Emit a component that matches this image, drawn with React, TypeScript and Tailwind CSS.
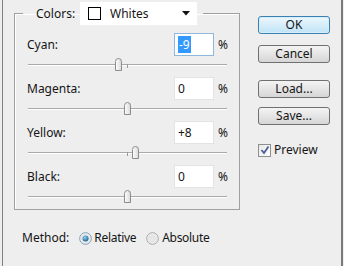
import React from "react";

const rows = [
  { name: "Cyan", text: "-9", value: -9, focused: true },
  { name: "Magenta", text: "0", value: 0 },
  { name: "Yellow", text: "+8", value: 8 },
  { name: "Black", text: "0", value: 0 },
];

function Thumb() {
  return (
    <svg width="9" height="14" viewBox="0 0 9 14" className="block">
      <defs>
        <linearGradient id="thumbFill" x1="0" y1="0" x2="1" y2="0">
          <stop offset="0" stopColor="#ffffff" />
          <stop offset="1" stopColor="#d9d9d9" />
        </linearGradient>
      </defs>
      <path
        d="M1.5 3.5 Q1.5 0.5 4.5 0.5 Q7.5 0.5 7.5 3.5 L7.5 12.5 L1.5 12.5 Z"
        fill="url(#thumbFill)"
        stroke="#8c8c8c"
      />
    </svg>
  );
}

function SliderRow({ value }: { value: number }) {
  return (
    <div className="relative h-[21px]">
      <div className="absolute left-[13px] right-[12px] top-[8px] h-[2px] border-t border-[#a9a9a9] border-b border-b-white" />
      <div className="absolute left-[112px] top-[8px] w-px h-[4px] bg-[#9a9a9a]" />
      <div className="absolute top-[2px]" style={{ left: 112 + value - 4 }}>
        <Thumb />
      </div>
    </div>
  );
}

function ColorRow({ name, text, value, focused }: { name: string; text: string; value: number; focused?: boolean }) {
  return (
    <div>
      <div className="flex items-center h-[23px] pl-[12px]">
        <span className="flex-1">{name}:</span>
        <div
          className={
            "w-[40px] h-[23px] bg-white border flex items-center pl-[3px] " +
            (focused ? "border-[#8fb8dd]" : "border-[#e3e3e3]")
          }
        >
          {focused ? <span className="bg-[#3399ff] text-white px-px leading-[17px]">{text}</span> : <span>{text}</span>}
        </div>
        <span className="ml-[4px] w-[21px]">%</span>
      </div>
      <SliderRow value={value} />
    </div>
  );
}

function Button({ label, primary }: { label: string; primary?: boolean }) {
  return (
    <div
      className={
        "h-[18px] w-[72px] rounded-[3px] border flex items-center justify-center leading-none " +
        (primary
          ? "border-[#3c7fb1] bg-gradient-to-b from-[#edf7fd] to-[#bfe3f6] shadow-[inset_0_0_0_1px_#d4eefc]"
          : "border-[#707070] bg-gradient-to-b from-[#f4f4f4] to-[#d6d6d6]")
      }
    >
      {label}
    </div>
  );
}

function Radio({ checked }: { checked?: boolean }) {
  return (
    <svg width="13" height="13" viewBox="0 0 13 13" className="block">
      <defs>
        <radialGradient id="radioOn" cx="0.4" cy="0.35" r="0.7">
          <stop offset="0" stopColor="#8fd4f5" />
          <stop offset="1" stopColor="#1a5f8c" />
        </radialGradient>
      </defs>
      <circle cx="6.5" cy="6.5" r="5.8" fill="#f4f4f4" stroke={checked ? "#7a9cb8" : "#a4a4a4"} />
      <circle cx="6.5" cy="6.5" r="4.5" fill="#e6e6e6" />
      {checked && <circle cx="6.5" cy="6.5" r="3" fill="url(#radioOn)" />}
    </svg>
  );
}

export default function App() {
  return (
    <div
      className="w-[344px] h-[266px] bg-[#eeeeee] flex text-[12px] text-[#151515]"
      style={{ fontFamily: '"Noto Sans", "Open Sans", sans-serif' }}
    >
      <div className="w-[2px]" />
      <div className="w-px bg-[#808080]" />
      <div className="w-[237px] flex flex-col">
        <fieldset className="ml-[11px] mt-[2px] w-[226px] border border-[#a0a0a0] shadow-[inset_1px_1px_0_#ffffff] p-0">
          <legend className="ml-[8px] pl-[13px] pr-[6px] flex items-center h-[23px]">
            <span className="w-[44px]">Colors:</span>
            <div className="w-[117px] h-[23px] bg-white flex items-center pl-[8px] pr-[4px]">
              <span className="w-[13px] h-[13px] border border-black bg-white" />
              <span className="ml-[9px] flex-1">Whites</span>
              <svg width="8" height="5" viewBox="0 0 8 5" className="mr-[3px]">
                <path d="M0 0 L8 0 L4 4.5 Z" fill="#111" />
              </svg>
            </div>
          </legend>
          <div className="mt-[8px]">
            {rows.map((r) => (
              <ColorRow key={r.name} {...r} />
            ))}
          </div>
        </fieldset>
        <div className="mt-[18px] h-[20px] pl-[19px] flex items-center">
          <span>Method:</span>
          <span className="ml-[10px]">
            <Radio checked />
          </span>
          <span className="ml-[2px] tracking-[-0.3px]">Relative</span>
          <span className="ml-[10px]">
            <Radio />
          </span>
          <span className="ml-[3px] tracking-[-0.3px]">Absolute</span>
        </div>
      </div>
      <div className="flex-1 pl-[18px] pt-[16px] flex flex-col">
        <Button label="OK" primary />
        <div className="mt-[11px]">
          <Button label="Cancel" />
        </div>
        <div className="mt-[17px]">
          <Button label="Load..." />
        </div>
        <div className="mt-[9px]">
          <Button label="Save..." />
        </div>
        <div className="mt-[16px] flex items-center">
          <span className="w-[13px] h-[13px] border border-[#8e8f8f] bg-gradient-to-br from-[#e6e6e6] to-[#ffffff] flex items-center justify-center">
            <svg width="10" height="10" viewBox="0 0 10 10">
              <path d="M1.5 5 L4 8 L8.5 1.5" fill="none" stroke="#4a5f97" strokeWidth="1.8" />
            </svg>
          </span>
          <span className="ml-[3px]">Preview</span>
        </div>
      </div>
      <div className="w-[2px] bg-[#7a7a7a]" />
      <div className="w-[1px]" />
    </div>
  );
}
